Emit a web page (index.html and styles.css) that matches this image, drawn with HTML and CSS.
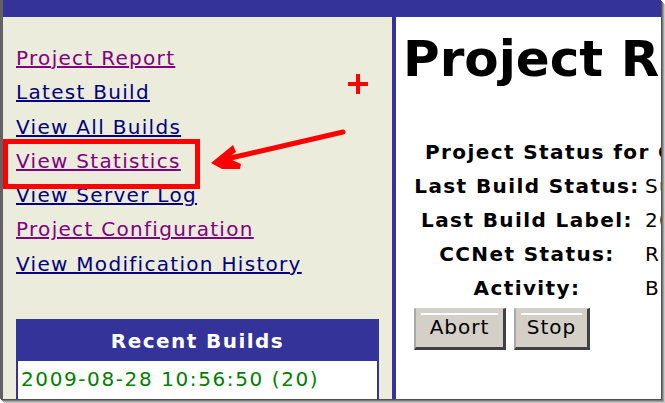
FILE: index.html
```html
<!DOCTYPE html>
<html>
<head>
<meta charset="utf-8">
<link rel="stylesheet" href="styles.css">
</head>
<body>
<div class="screen">
  <div class="window">
    <div class="topbar"></div>
    <div class="main">
      <div class="sidebar">
        <nav class="links">
          <a class="visited" href="#">Project Report</a>
          <a href="#">Latest Build</a>
          <a href="#">View All Builds</a>
          <a class="visited" href="#">View Statistics</a>
          <a href="#">View Server Log</a>
          <a class="visited" href="#">Project Configuration</a>
          <a href="#">View Modification History</a>
        </nav>
        <div class="recent">
          <div class="recent-head">Recent Builds</div>
          <div class="recent-body">
            <div class="build">2009-08-28 10:56:50 (20)</div>
            <div class="build">2009-08-28 10:32:11 (19)</div>
          </div>
        </div>
      </div>
      <div class="content">
        <h1 class="title">Project Report</h1>
        <div class="status">
          <div class="status-title">Project Status for CCNetProject</div>
          <div class="label">Last Build Status:</div><div class="value">Success</div>
          <div class="label">Last Build Label:</div><div class="value">20</div>
          <div class="label">CCNet Status:</div><div class="value">Running</div>
          <div class="label">Activity:</div><div class="value">Building</div>
        </div>
        <div class="buttons">
          <button class="btn btn-abort">Abort</button>
          <button class="btn btn-stop">Stop</button>
        </div>
      </div>
    </div>
  </div>
  <svg class="annot" width="665" height="403" viewBox="0 0 665 403">
    <rect x="5.5" y="141.5" width="192" height="45" fill="none" stroke="#ff0000" stroke-width="5"/>
    <line x1="343" y1="132" x2="222" y2="160" stroke="#ff0000" stroke-width="5" stroke-linecap="round"/>
    <polygon points="211,163 233,145 236,152 228,158 241,164 240,169 222,169" fill="#ff0000"/>
    <rect x="348" y="82" width="20" height="4" fill="#ff0000"/>
    <rect x="356" y="74" width="4" height="20" fill="#ff0000"/>
  </svg>
</div>
</body>
</html>
```

FILE: styles.css
```css
* { box-sizing: border-box; }
html, body { margin: 0; padding: 0; }
body {
  width: 665px;
  height: 403px;
  overflow: hidden;
  background: #ffffff;
  font-family: "DejaVu Sans", Verdana, sans-serif;
}
.screen {
  position: relative;
  width: 665px;
  height: 403px;
}
.window {
  width: 661px;
  height: 399px;
  border-left: 3px solid #626262;
  display: flex;
  flex-direction: column;
  overflow: hidden;
  box-shadow: 1px 1px 0 #505050, 2px 2px 0 #7a7a7a, 3px 3px 0 #a0a0a0, 4px 4px 0 #c8c8c8;
}
.topbar {
  height: 17px;
  background: #333399;
  flex: none;
}
.main {
  flex: 1;
  display: flex;
  min-height: 0;
}
.sidebar {
  width: 389px;
  flex: none;
  background: #ececdc;
  padding: 24px 0 0 13px;
}
.links {
  display: flex;
  flex-direction: column;
}
.links a {
  font-size: 20px;
  letter-spacing: 1.3px;
  line-height: 34.3px;
  color: #000080;
  text-decoration: underline;
  align-self: flex-start;
  white-space: nowrap;
}
.links a.visited { color: #800080; }
.recent {
  margin-top: 38px;
  width: 363px;
  border: 2px solid #333399;
  border-bottom: none;
  background: #ffffff;
}
.recent-head {
  background: #333399;
  color: #ffffff;
  font-weight: bold;
  font-size: 20px;
  letter-spacing: 1.45px;
  height: 40px;
  line-height: 40px;
  text-align: center;
}
.recent-body {
  padding: 3px 0 0 3px;
}
.build {
  color: #008000;
  font-size: 20px;
  letter-spacing: 1.6px;
  line-height: 30px;
  white-space: nowrap;
}
.content {
  flex: 1;
  background: #ffffff;
  border-left: 4px solid #333399;
  padding: 14px 0 0 7px;
  overflow: hidden;
  min-width: 0;
}
.title {
  margin: 0;
  font-size: 50px;
  line-height: 56px;
  font-weight: bold;
  color: #000000;
  white-space: nowrap;
}
.status {
  margin-top: 48px;
  margin-left: 8px;
  display: grid;
  grid-template-columns: 232px max-content;
  column-gap: 2px;
  font-size: 20px;
  letter-spacing: 1.4px;
  line-height: 34px;
  white-space: nowrap;
}
.status-title {
  grid-column: 1 / -1;
  font-weight: bold;
  padding-left: 14px;
}
.label {
  font-weight: bold;
  text-align: center;
}
.value { font-weight: normal; }
.buttons {
  display: flex;
  gap: 8px;
  margin-top: 3px;
  margin-left: 11px;
}
.btn {
  font-family: "DejaVu Sans", Verdana, sans-serif;
  font-size: 20px;
  letter-spacing: 1px;
  height: 42px;
  padding: 0 0 2px 0;
  color: #000000;
  border-style: solid;
  border-width: 1px 3px 3px 2px;
  border-color: #d4d0c8 #404040 #404040 #a8a8a8;
  background: linear-gradient(#ffffff, #ffffff) no-repeat 5px 4px / calc(100% - 10px) 2px, #d4d0c8;
}
.btn-abort { width: 92px; }
.btn-stop { width: 76px; }
.annot {
  position: absolute;
  left: 0;
  top: 0;
  pointer-events: none;
}
```
